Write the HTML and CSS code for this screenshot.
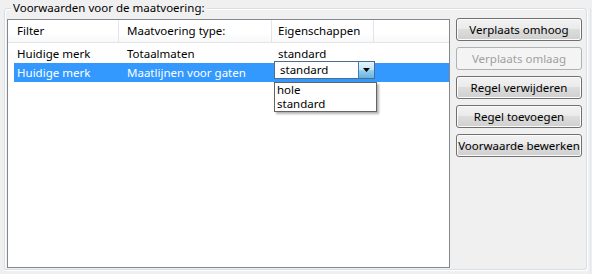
FILE: index.html
```html
<!DOCTYPE html>
<html>
<head>
<meta charset="utf-8">
<link rel="stylesheet" href="styles.css">
</head>
<body>
<div class="window">
  <div class="group">
    <div class="legend">Voorwaarden voor de maatvoering:</div>
    <div class="list">
      <div class="header">
        <div class="hc c1">Filter</div>
        <div class="hc c2">Maatvoering type:</div>
        <div class="hc c3">Eigenschappen</div>
        <div class="hc c4"></div>
      </div>
      <div class="row">
        <div class="cell c1">Huidige merk</div>
        <div class="cell c2">Totaalmaten</div>
        <div class="cell c3">standard</div>
      </div>
      <div class="row sel">
        <div class="cell c1">Huidige merk</div>
        <div class="cell c2">Maatlijnen voor gaten</div>
        <div class="cell c3"></div>
      </div>
      <div class="combo">
        <span class="combo-text">standard</span>
        <span class="combo-btn"><svg width="7" height="4" viewBox="0 0 7 4"><path d="M0 0H7L3.5 4Z" fill="#000"/></svg></span>
      </div>
      <div class="dropdown">
        <div class="opt">hole</div>
        <div class="opt">standard</div>
      </div>
    </div>
    <div class="buttons">
      <button class="btn">Verplaats omhoog</button>
      <button class="btn" disabled>Verplaats omlaag</button>
      <button class="btn">Regel verwijderen</button>
      <button class="btn">Regel toevoegen</button>
      <button class="btn">Voorwaarde bewerken</button>
    </div>
  </div>
</div>
</body>
</html>
```
FILE: styles.css
```css
html, body {
  margin: 0;
  padding: 0;
}
body {
  background: #f0f0f0;
  font-family: "Noto Sans", "Open Sans", sans-serif;
  font-size: 11.5px;
  color: #000;
  width: 592px;
  height: 274px;
  overflow: hidden;
}
.window {
  width: 590px;
  height: 272px;
  border-right: 1px solid #dfe5ea;
  border-bottom: 1px solid #dfe5ea;
}
.group {
  position: relative;
  margin: 8px 0 0 4px;
  width: 579px;
  height: 250px;
  padding: 10px 0 0 2px;
  border: 1px solid #d5dfe5;
  border-radius: 3px;
  box-shadow: 1px 1px 0 #ffffff, inset 1px 1px 0 #ffffff;
  display: flex;
  align-items: flex-start;
}
.legend {
  position: absolute;
  top: -9px;
  left: 6px;
  padding: 0 2px;
  background: #f0f0f0;
  line-height: 16px;
  color: #000;
}
.list {
  position: relative;
  width: 441px;
  height: 247px;
  border: 1px solid #828790;
  background: #fff;
}
.header {
  display: flex;
  height: 22px;
  border-bottom: 1px solid #e5e5e5;
  background: linear-gradient(#ffffff, #ffffff 60%, #f7f8f9);
}
.hc {
  line-height: 22px;
  box-sizing: border-box;
  border-right: 1px solid #e3e5e8;
}
.c1 { width: 111px; padding-left: 9px; }
.c2 { width: 153px; padding-left: 8px; }
.c3 { width: 102px; padding-left: 6px; }
.hc.c4 { width: 2px; border-right: none; }
.cell { box-sizing: border-box; white-space: nowrap; }
.header .c1, .row .c1 { width: 111px; }
.header .c2, .row .c2 { width: 153px; }
.header .c3, .row .c3 { width: 102px; }
.row {
  display: flex;
  height: 19px;
  line-height: 19px;
  margin-top: 1px;
}
.row + .row { margin-top: 0; }
.row.sel {
  background: #3399ff;
  color: #fff;
  margin-left: 6px;
}
.row.sel .c1 { width: 105px; padding-left: 3px; }
.cell.c3 { padding-left: 6px; }
.combo {
  position: absolute;
  left: 266px;
  top: 41px;
  width: 99px;
  height: 16px;
  border: 1px solid #4d6c8f;
  background: #fff;
  display: flex;
  align-items: center;
}
.combo-text {
  flex: 1;
  padding-left: 5px;
  line-height: 16px;
}
.combo-btn {
  width: 16px;
  height: 16px;
  box-sizing: border-box;
  border-left: 1px solid #3c7fb1;
  background: linear-gradient(#e5f4fc, #c4e5f6 50%, #98d1ef 51%, #68b3db);
  display: flex;
  align-items: center;
  justify-content: center;
}
.dropdown {
  position: absolute;
  left: 266px;
  top: 62px;
  width: 99px;
  height: 28px;
  border: 1px solid #646464;
  background: #fff;
  box-shadow: 2px 2px 2px rgba(0,0,0,0.3);
  padding-left: 2px;
  box-sizing: content-box;
}
.opt {
  line-height: 14px;
  margin-top: 0;
}
.buttons {
  display: flex;
  flex-direction: column;
  gap: 6px;
  margin: -1px 0 0 6px;
}
.btn {
  width: 126px;
  height: 23px;
  margin: 0;
  padding: 0;
  font-family: inherit;
  font-size: 11.5px;
  color: #000;
  border: 1px solid #707070;
  border-radius: 3px;
  background: linear-gradient(#f2f2f2, #ebebeb 45%, #dddddd 50%, #cfcfcf);
  box-shadow: inset 0 0 0 1px #fcfcfc;
  white-space: nowrap;
}
.btn:disabled {
  color: #a0a0a0;
  border-color: #adb2b5;
  background: #f4f4f4;
  box-shadow: none;
}
```
